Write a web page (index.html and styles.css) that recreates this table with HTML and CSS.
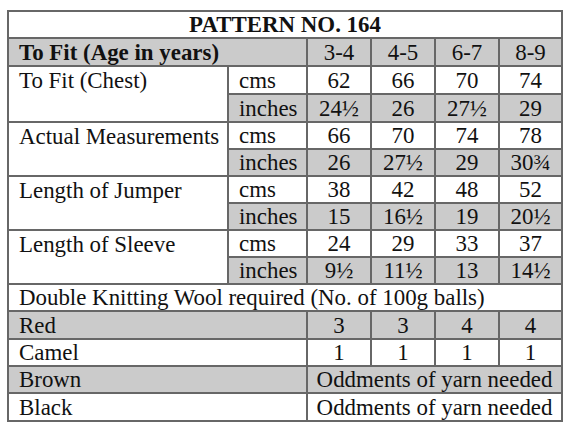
FILE: index.html
```html
<!DOCTYPE html>
<html lang="en">
<head>
<meta charset="utf-8">
<title>Pattern No. 164</title>
<link rel="stylesheet" href="styles.css">
</head>
<body>
<div class="sheet">
<table class="pattern">
  <colgroup>
    <col class="c-label">
    <col class="c-unit">
    <col class="c-val">
    <col class="c-val">
    <col class="c-val">
    <col class="c-last">
  </colgroup>
  <tbody>
    <tr class="h27">
      <td colspan="6" class="title">PATTERN NO. 164</td>
    </tr>
    <tr class="h28 shade">
      <td colspan="2" class="head">To Fit (Age in years)</td>
      <td class="v">3-4</td><td class="v">4-5</td><td class="v">6-7</td><td class="v">8-9</td>
    </tr>
    <tr class="h28">
      <td rowspan="2" class="label">To Fit (Chest)</td>
      <td class="unit">cms</td>
      <td class="v">62</td><td class="v">66</td><td class="v">70</td><td class="v">74</td>
    </tr>
    <tr class="h28 shade">
      <td class="unit">inches</td>
      <td class="v">24½</td><td class="v">26</td><td class="v">27½</td><td class="v">29</td>
    </tr>
    <tr class="h27">
      <td rowspan="2" class="label">Actual Measurements</td>
      <td class="unit">cms</td>
      <td class="v">66</td><td class="v">70</td><td class="v">74</td><td class="v">78</td>
    </tr>
    <tr class="h27 shade">
      <td class="unit">inches</td>
      <td class="v">26</td><td class="v">27½</td><td class="v">29</td><td class="v">30¾</td>
    </tr>
    <tr class="h27">
      <td rowspan="2" class="label">Length of Jumper</td>
      <td class="unit">cms</td>
      <td class="v">38</td><td class="v">42</td><td class="v">48</td><td class="v">52</td>
    </tr>
    <tr class="h27 shade">
      <td class="unit">inches</td>
      <td class="v">15</td><td class="v">16½</td><td class="v">19</td><td class="v">20½</td>
    </tr>
    <tr class="h27">
      <td rowspan="2" class="label">Length of Sleeve</td>
      <td class="unit">cms</td>
      <td class="v">24</td><td class="v">29</td><td class="v">33</td><td class="v">37</td>
    </tr>
    <tr class="h27 shade">
      <td class="unit">inches</td>
      <td class="v">9½</td><td class="v">11½</td><td class="v">13</td><td class="v">14½</td>
    </tr>
    <tr class="h27">
      <td colspan="6" class="text">Double Knitting Wool required (No. of 100g balls)</td>
    </tr>
    <tr class="h28 shade">
      <td colspan="2" class="text">Red</td>
      <td class="v">3</td><td class="v">3</td><td class="v">4</td><td class="v">4</td>
    </tr>
    <tr class="h27">
      <td colspan="2" class="text">Camel</td>
      <td class="v">1</td><td class="v">1</td><td class="v">1</td><td class="v">1</td>
    </tr>
    <tr class="h27 shade">
      <td colspan="2" class="text">Brown</td>
      <td colspan="4" class="v">Oddments of yarn needed</td>
    </tr>
    <tr class="h28">
      <td colspan="2" class="text">Black</td>
      <td colspan="4" class="v">Oddments of yarn needed</td>
    </tr>
  </tbody>
</table>
</div>
</body>
</html>
```

FILE: styles.css
```css
html, body {
  margin: 0;
  padding: 0;
  background: #ffffff;
}

.sheet {
  padding: 10px 0 0 7px;
}

.pattern {
  border-collapse: separate;
  border-spacing: 0;
  table-layout: fixed;
  width: 556px;
  border-top: 2px solid #676767;
  border-left: 2px solid #676767;
  font-family: "Liberation Serif", "Times New Roman", serif;
  font-size: 22.9px;
  color: #111111;
}

.c-label { width: 220px; }
.c-unit { width: 79px; }
.c-val { width: 64px; }
.c-last { width: 63px; }

.pattern td {
  border-right: 2px solid #676767;
  border-bottom: 2px solid #676767;
  padding: 0 0 0 10px;
  line-height: 25px;
  white-space: nowrap;
  overflow: hidden;
  vertical-align: middle;
  background: #ffffff;
}

.h27 { height: 27px; }
.h28 { height: 28px; }

.pattern .shade td {
  background: #cbcbcb;
}

.pattern td.label {
  vertical-align: top;
  background: #ffffff;
  padding-top: 1px;
}

.pattern td.title {
  text-align: center;
  font-weight: bold;
  padding-left: 0;
}

.pattern td.head {
  font-weight: bold;
}

.pattern td.v {
  text-align: center;
  padding-left: 0;
}
```
